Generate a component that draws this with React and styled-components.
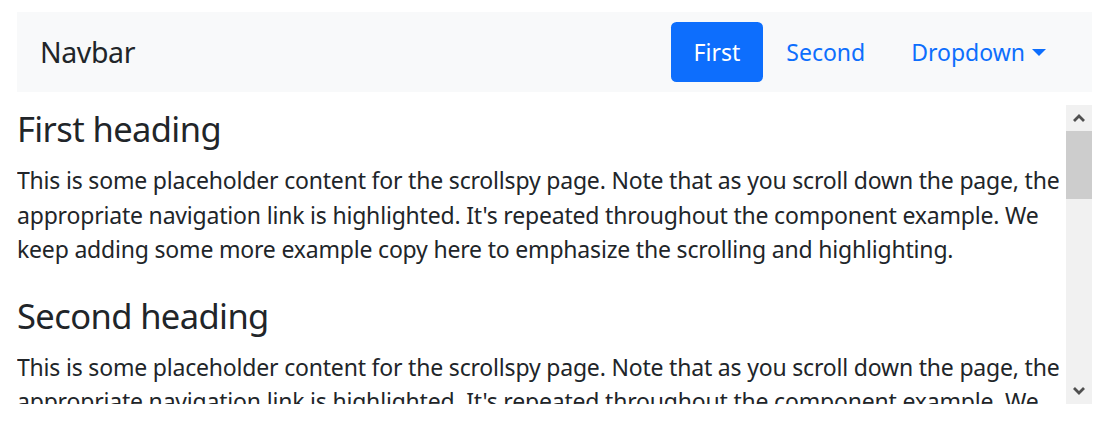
import React from "react";
import styled, { createGlobalStyle } from "styled-components";

const Global = createGlobalStyle`
  html, body { margin: 0; padding: 0; background: #fff; }
  body {
    font-family: "Noto Sans", "Open Sans", sans-serif;
    color: #212529;
    -webkit-font-smoothing: antialiased;
  }
  * { box-sizing: border-box; }
`;

const Page = styled.div`
  width: 1104px;
  height: 429px;
  padding: 12px 12px 0 17px;
  overflow: hidden;
`;

const Navbar = styled.nav`
  display: flex;
  align-items: center;
  justify-content: space-between;
  height: 80px;
  padding: 0 23px;
  background: #f8f9fa;
`;

const Brand = styled.a`
  font-size: 28.5px;
  line-height: 1;
  color: #212529;
  text-decoration: none;
  letter-spacing: -0.4px;
`;

const NavList = styled.ul`
  display: flex;
  list-style: none;
  margin: -1px 0 0;
  padding: 0;
`;

const NavLink = styled.a`
  display: flex;
  align-items: center;
  height: 60px;
  padding: 0 23px;
  font-size: 23px;
  letter-spacing: 0;
  border-radius: 5.5px;
  text-decoration: none;
  color: ${(p) => (p.$active ? "#fff" : "#0d6efd")};
  background: ${(p) => (p.$active ? "#0d6efd" : "transparent")};
`;

const Caret = styled.span`
  display: inline-block;
  margin-left: 7px;
  margin-top: 2px;
  border-top: 7px solid currentColor;
  border-left: 7.5px solid transparent;
  border-right: 7.5px solid transparent;
`;

const ScrollArea = styled.div`
  display: flex;
  height: 299px;
  margin-top: 13px;
`;

const Content = styled.div`
  flex: 1;
  overflow: hidden;
  padding-top: 3px;
`;

const Heading = styled.h4`
  margin: 0 0 13.5px;
  font-size: 34.5px;
  font-weight: 400;
  line-height: 41.5px;
  letter-spacing: -0.6px;
`;

const Para = styled.p`
  margin: 0 0 28px;
  font-size: 23px;
  line-height: 34.5px;
  letter-spacing: -0.19px;
`;

const Track = styled.div`
  width: 26px;
  display: flex;
  flex-direction: column;
  background: #f1f1f1;
`;

const ArrowButton = styled.div`
  height: 26px;
  display: flex;
  align-items: center;
  justify-content: center;
  color: #505050;
`;

const Thumb = styled.div`
  height: 68px;
  background: #cdcdcd;
`;

const Spacer = styled.div`
  flex: 1;
`;

const Chevron = ({ up }) => (
  <svg width="12" height="8" viewBox="0 0 12 8">
    <path
      d={up ? "M1 7 L6 2 L11 7" : "M1 1 L6 6 L11 1"}
      fill="none"
      stroke="currentColor"
      strokeWidth="2.8"
    />
  </svg>
);

const text =
  "This is some placeholder content for the scrollspy page. Note that as you scroll down the page, the appropriate navigation link is highlighted. It's repeated throughout the component example. We keep adding some more example copy here to emphasize the scrolling and highlighting.";

export default function App() {
  return (
    <>
      <Global />
      <Page>
        <Navbar>
          <Brand href="#">Navbar</Brand>
          <NavList>
            <li>
              <NavLink href="#first" $active>
                First
              </NavLink>
            </li>
            <li>
              <NavLink href="#second">Second</NavLink>
            </li>
            <li>
              <NavLink href="#">
                Dropdown
                <Caret />
              </NavLink>
            </li>
          </NavList>
        </Navbar>
        <ScrollArea>
          <Content>
            <Heading id="first">First heading</Heading>
            <Para>{text}</Para>
            <Heading id="second">Second heading</Heading>
            <Para>{text}</Para>
            <Heading>Third heading</Heading>
            <Para>{text}</Para>
          </Content>
          <Track>
            <ArrowButton>
              <Chevron up />
            </ArrowButton>
            <Thumb />
            <Spacer />
            <ArrowButton>
              <Chevron />
            </ArrowButton>
          </Track>
        </ScrollArea>
      </Page>
    </>
  );
}
